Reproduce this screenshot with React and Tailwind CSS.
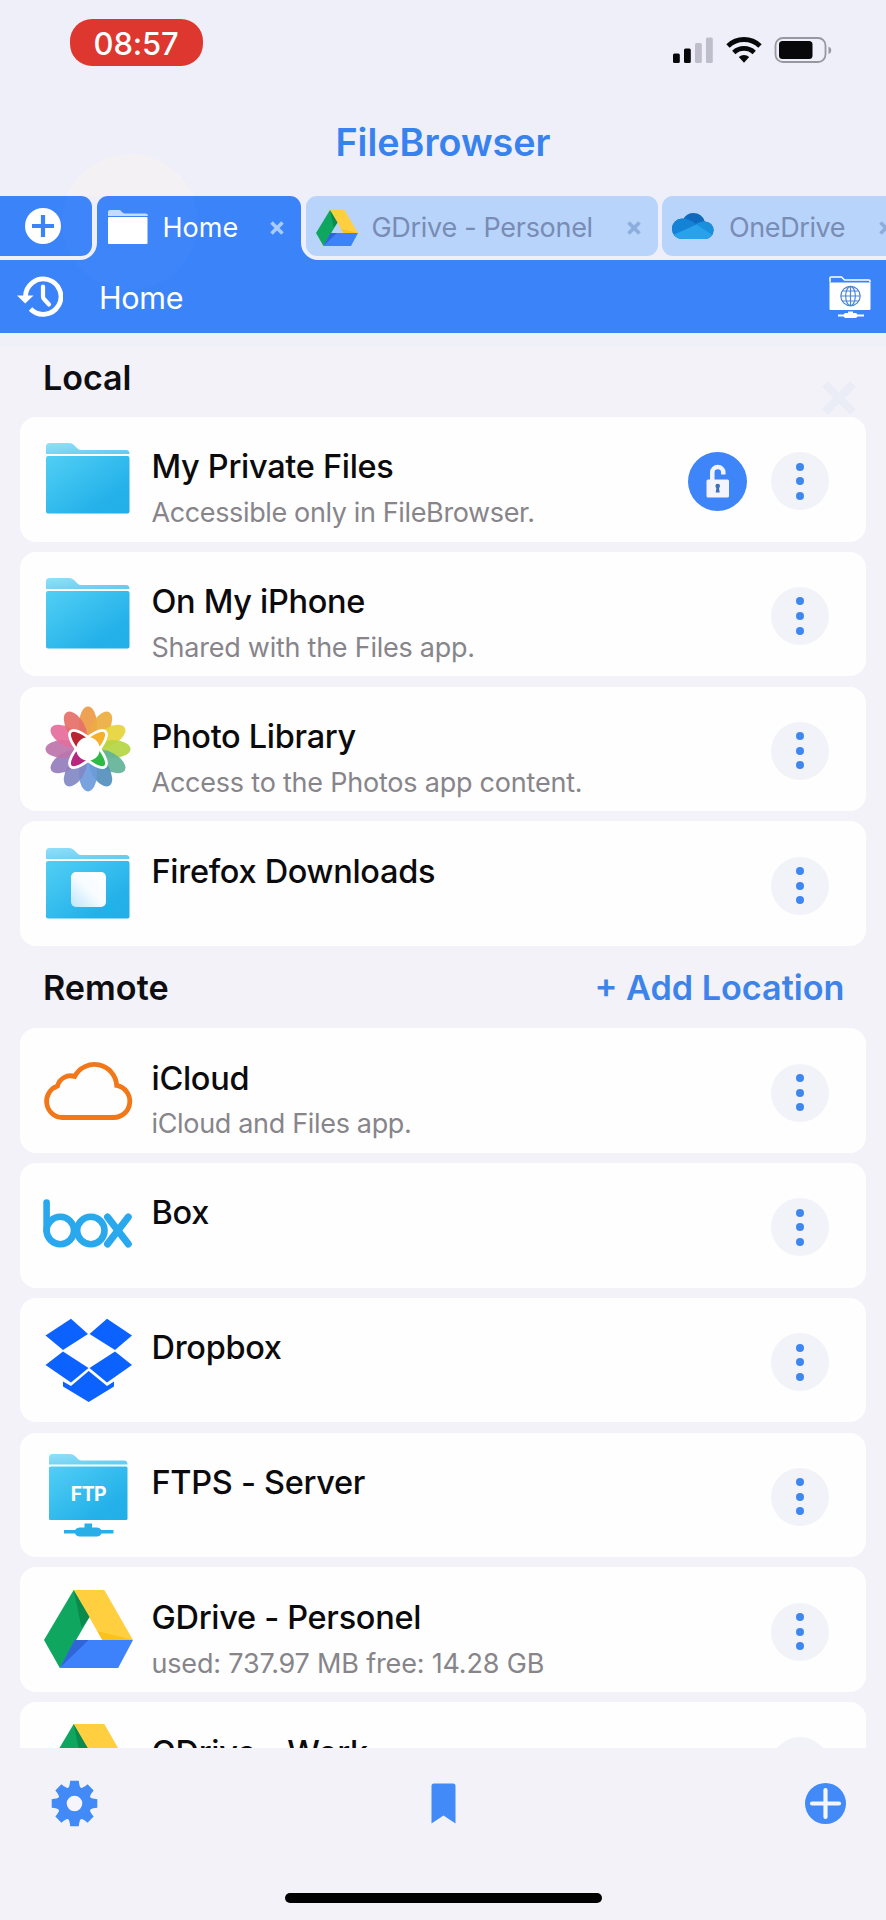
const DRIVE_FACES = [
  ["M30 0 L0 50 L16 78 L46 27 Z", "#0FA75F"],
  ["M30 0 L61 0 L90 50 L59 50 Z", "#FFCF3F"],
  ["M31 50 L90 50 L75 78 L16 78 Z", "#3E82FB"],
  ["M30 0 L46 27 L38 38 Z", "#0B8A4C"],
  ["M16 78 L31 50 L45 50 Z", "#2F65D6"],
  ["M90 50 L54 41 L59 50 Z", "#FBC21B"],
];

function DriveIcon({ className }) {
  return (
    <svg viewBox="0 0 90 78" className={className} preserveAspectRatio="none">
      {DRIVE_FACES.map(([d, fill]) => (
        <path key={d} d={d} fill={fill} />
      ))}
    </svg>
  );
}

function Frame({ children }) {
  return (
    <svg viewBox="0 0 90 90" className="h-[90px] w-[90px] shrink-0">
      {children}
    </svg>
  );
}

function Gradients({ id }) {
  return (
    <defs>
      <linearGradient id={id} x1="0" y1="0" x2="1" y2="1">
        <stop offset="0" stopColor="#51CFF5" />
        <stop offset="0.75" stopColor="#24B1E9" />
        <stop offset="1" stopColor="#22AEE7" />
      </linearGradient>
      <linearGradient id={id + "-back"} x1="0" y1="0" x2="1" y2="1">
        <stop offset="0" stopColor="#90E0FA" />
        <stop offset="1" stopColor="#62C9EE" />
      </linearGradient>
    </defs>
  );
}

function FolderIcon({ id, badge }) {
  return (
    <Frame>
      <Gradients id={id} />
      <path
        d="M3 20 V12.500 Q3 9 6.500 9 H26 Q29 9 31 11 L34.500 14.500 Q36 16 38.500 16 H83 Q86.500 16 86.500 20 Z"
        fill={`url(#${id}-back)`}
      />
      <rect x="3" y="22" width="83.500" height="57.500" rx="2" fill={`url(#${id})`} />
      {badge && (
        <>
          <defs>
            <linearGradient id={id + "-badge"} x1="0" y1="1" x2="1" y2="0">
              <stop offset="0" stopColor="#BFE5FB" />
              <stop offset="0.5" stopColor="#F7FCFF" />
              <stop offset="1" stopColor="#FFFFFF" />
            </linearGradient>
          </defs>
          <rect x="28" y="33" width="35" height="35" rx="5" fill={`url(#${id}-badge)`} />
        </>
      )}
    </Frame>
  );
}

const PETALS = [
  "#EB9A45", "#EBAC40", "#E6D53A", "#B5D543", "#62B397", "#538FBC",
  "#6E9BDC", "#8288C4", "#957DBC", "#BD74AB", "#E56C9C", "#E56F66",
];

const LOBES = [
  ["#F5B12E", -45],
  ["#2DBB45", 45],
  ["#B8267F", 135],
  ["#B92430", 225],
];

function PhotosIcon() {
  return (
    <Frame>
      {PETALS.map((fill, i) => (
        <ellipse
          key={fill}
          cx="45"
          cy="20"
          rx="9"
          ry="17.500"
          fill={fill}
          fillOpacity="0.92"
          transform={`rotate(${i * 30} 45 45)`}
        />
      ))}
      <g transform="translate(45 45)" stroke="#fff" strokeWidth="2.800">
        {LOBES.map(([fill, angle]) => (
          <path
            key={fill}
            d="M0 -8.700 A24.600 8.700 0 0 1 0 8.700 Z"
            fill={fill}
            transform={`rotate(${angle})`}
          />
        ))}
      </g>
      <circle cx="45" cy="45" r="11.800" fill="#fff" />
    </Frame>
  );
}

function ICloudIcon() {
  return (
    <Frame>
      <path
        d="M19.300 71.500 H70.400 A16.200 16.200 0 0 0 73.700 39.400 A22.300 22.300 0 0 0 31.700 30.400 A13.500 13.500 0 0 0 14.500 40 A16.200 16.200 0 0 0 19.300 71.500 Z"
        fill="none"
        stroke="#F27719"
        strokeWidth="4.800"
      />
    </Frame>
  );
}

function BoxIcon() {
  return (
    <Frame>
      <g fill="none" stroke="#29A8EE" strokeWidth="6.600" strokeLinecap="round">
        <path d="M3.600 22.500 V50.500" />
        <circle cx="17.300" cy="50.500" r="13.700" />
        <circle cx="47.800" cy="50.500" r="13.700" />
        <path strokeWidth="7" d="M64.500 37 L85.300 64 M85.300 37 L64.500 64" />
      </g>
    </Frame>
  );
}

function DropboxIcon() {
  return (
    <Frame>
      <g fill="#0B62FF">
        <path d="M28 3.700 L45 19 L20 35 L2.500 20.500 Z" />
        <path d="M64 3.700 L89 20.500 L72 35 L46.500 19 Z" />
        <path d="M20 36.500 L45.500 53 L28 67.500 L2.500 50 Z" />
        <path d="M72 36.500 L89 50 L64 67.500 L46.500 53 Z" />
        <path d="M45.700 56 L64 71 L71 66.500 V71.500 L45.700 87 L20 71.500 V66.500 L28 71 Z" />
      </g>
    </Frame>
  );
}

function FtpIcon() {
  return (
    <Frame>
      <Gradients id="ftp" />
      <path
        d="M6 14.500 V7.500 Q6 4 9.500 4 H27 Q30 4 32 6 L35 9 Q36.500 10.500 39 10.500 H81 Q84.500 10.500 84.500 14.500 Z"
        fill="url(#ftp-back)"
      />
      <rect x="6" y="16.500" width="78.500" height="53.500" rx="1.500" fill="url(#ftp)" />
      <text
        x="45.500"
        y="50.500"
        textAnchor="middle"
        fontFamily="Inter, sans-serif"
        fontWeight="700"
        fontSize="19.500"
        letterSpacing="-0.600"
        fill="#fff"
      >
        FTP
      </text>
      <path
        d="M41.500 73.500 H49 V77.500 H54 Q57 77.500 58.500 80 H70.500 V83.500 H58.500 Q57 86.500 54 86.500 H36.500 Q33.500 86.500 32 83.500 H21 V80 H32 Q33.500 77.500 36.500 77.500 H41.500 Z"
        fill="#29AEE6"
      />
    </Frame>
  );
}

function DriveRowIcon() {
  return (
    <div className="flex h-[90px] w-[90px] shrink-0 items-center justify-center pb-[2px]">
      <DriveIcon className="h-[78px] w-[89px]" />
    </div>
  );
}

function LockButton() {
  return (
    <button className="h-[59px] w-[59px]">
      <svg viewBox="0 0 59 59" className="h-full w-full">
        <circle cx="29.500" cy="29.500" r="29.500" fill="#3D85F8" />
        <path
          d="M24.300 29 V20.500 A5.500 5.500 0 0 1 35.300 20.500 V22.500"
          fill="none"
          stroke="#F3F4FC"
          strokeWidth="4.500"
        />
        <rect x="18.500" y="27.500" width="22.500" height="18" rx="1.500" fill="#F3F4FC" />
        <circle cx="29.700" cy="34" r="2.300" fill="#3D6FB8" />
        <path d="M28.700 34 H30.700 L31.700 40.500 H27.700 Z" fill="#3D6FB8" />
      </svg>
    </button>
  );
}

function MoreButton() {
  return (
    <button className="flex h-[58px] w-[58px] flex-col items-center justify-center gap-[6.600px] rounded-full bg-[#F2F2F9]">
      <span className="h-2 w-2 rounded-full bg-[#3F87F0]" />
      <span className="h-2 w-2 rounded-full bg-[#3F87F0]" />
      <span className="h-2 w-2 rounded-full bg-[#3F87F0]" />
    </button>
  );
}

function Row({ icon, title, note, noteClass, locked }) {
  return (
    <div className="flex h-[124.600px] shrink-0 rounded-2xl bg-[#FEFEFF] pr-[37px] pl-[23px]">
      <div className="pt-[17.300px]">{icon}</div>
      <div className="min-w-0 flex-1 pt-[30.400px] pl-[18.500px] whitespace-nowrap">
        <div className="text-[32.500px] leading-[40px] font-medium tracking-[-0.300px] text-[#0B0B0D]">{title}</div>
        {note && (
          <div className={`mt-[9.800px] text-[27px] leading-[32px] text-[#87858A] ${noteClass}`}>{note}</div>
        )}
      </div>
      <div className="flex items-center gap-[24.500px] pt-[4px]">
        {locked && <LockButton />}
        <MoreButton />
      </div>
    </div>
  );
}

function Close({ className }) {
  return (
    <svg viewBox="0 0 14 14" className={`h-3.5 w-3.5 shrink-0 ${className}`}>
      <path d="M1.500 1.500 L12.500 12.500 M12.500 1.500 L1.500 12.500" stroke="currentColor" strokeWidth="3.600" />
    </svg>
  );
}

function OneDriveIcon() {
  return (
    <svg viewBox="0 0 42 26" className="h-[26px] w-[42px] shrink-0">
      <defs>
        <clipPath id="onedrive-cloud">
          <circle cx="21.500" cy="11.800" r="11.800" />
          <circle cx="10.200" cy="15.800" r="10.200" />
          <circle cx="32.800" cy="17.200" r="8.800" />
          <rect x="10" y="12" width="23" height="14" />
        </clipPath>
      </defs>
      <g clipPath="url(#onedrive-cloud)">
        <rect width="42" height="26" fill="#0F6ABD" />
        <path d="M0 3 L10 5.500 Q17 5.500 24 11 L14 26 H0 Z" fill="#1483D6" />
        <path d="M24 11 Q29 7.500 35 8.500 H42 V26 H20 Z" fill="#1A8FDB" />
        <path d="M0 22.500 L24.500 11.500 L42 23 V26 H0 Z" fill="#28A2EA" />
      </g>
    </svg>
  );
}

function StatusBar() {
  return (
    <div className="flex h-[85px] justify-between pr-[54.500px] pl-[69.500px]">
      <div className="mt-[19px] flex h-[47px] w-[133px] items-center justify-center rounded-[22px] bg-[#DD372F] pt-[3px] text-[31px] font-medium tracking-[-0.200px] text-white">
        08:57
      </div>
      <svg viewBox="0 0 160 28" className="mt-9 h-7 w-40">
        <rect x="1" y="17.500" width="6.800" height="9.500" rx="1.500" fill="#08080A" />
        <rect x="12" y="12.500" width="6.800" height="14.500" rx="1.500" fill="#08080A" />
        <rect x="23" y="7" width="6.800" height="20" rx="1.500" fill="#BEBDC9" />
        <rect x="34" y="1.500" width="6.800" height="25.500" rx="1.500" fill="#BEBDC9" />
        <g fill="none" stroke="#08080A" strokeWidth="4.800">
          <path d="M56 10 A23 23 0 0 1 88 10" />
          <path d="M61.800 16.400 A15 15 0 0 1 82.200 16.400" />
        </g>
        <path d="M66.800 21 A8 8 0 0 1 77.200 21 L72 26.800 Z" fill="#08080A" />
        <rect x="103.500" y="2" width="50" height="24" rx="7.500" fill="none" stroke="#98979F" strokeWidth="1.800" />
        <rect x="107" y="5" width="33.500" height="18" rx="3.500" fill="#08080A" />
        <path d="M156.500 10.500 Q159.300 11.500 159.300 14.200 Q159.300 17 156.500 18 Z" fill="#98979F" />
      </svg>
    </div>
  );
}

function TabStrip() {
  return (
    <div className="flex h-16 overflow-hidden bg-[linear-gradient(#EEEFF8_50%,#3B83F9_50%)] text-[27px] whitespace-nowrap">
      <div className="h-16 w-[97px] shrink-0 rounded-br-[17px] bg-[#EEEFF8]">
        <button className="flex h-[60px] w-[92px] items-center rounded-r-[11px] bg-[#3B83F9] pl-[25px]">
          <svg viewBox="0 0 36 36" className="h-9 w-9">
            <circle cx="18" cy="18" r="18" fill="#fff" />
            <path d="M7 18 H29 M18 7 V29" stroke="#3B83F9" strokeWidth="4.200" />
          </svg>
        </button>
      </div>
      <div className="flex h-16 w-[204px] shrink-0 items-center rounded-t-[11px] bg-[#3B83F9] pr-[17px] pb-[2px] pl-[11px] text-white">
        <svg viewBox="0 0 40 34" className="h-[34px] w-10 shrink-0">
          <path d="M0 6 V2 Q0 0 2 0 H12 Q15 3.500 17 3.500 H38 Q40 3.500 40 6 Z" fill="#C4DBFD" />
          <rect y="7" width="39.500" height="27" rx="1" fill="#fff" />
        </svg>
        <span className="flex-1 pt-[3px] pl-[14.500px]">Home</span>
        <Close className="mt-px text-[#A9CBFD]" />
      </div>
      <div className="flex h-16 flex-1 gap-[4.500px] rounded-bl-[17px] bg-[#EEEFF8] pl-[4.500px] text-[#788CB4]">
        <div className="flex h-[60px] w-[352px] shrink-0 items-center rounded-[11px] bg-[#B8D4FB] pr-[17px] pl-[10.500px]">
          <DriveIcon className="mt-1 h-9 w-[42px] shrink-0" />
          <span className="flex-1 pt-[5px] pl-[13.500px] tracking-[-0.300px]">GDrive - Personel</span>
          <Close className="mt-1 text-[#8DADDC]" />
        </div>
        <div className="flex h-[60px] w-[250px] shrink-0 items-center rounded-l-[11px] bg-[#B8D4FB] pl-[10px]">
          <OneDriveIcon />
          <span className="w-[165px] pt-[5px] pl-[15px] tracking-[-0.400px]">OneDrive</span>
          <Close className="mt-1 text-[#8DADDC]" />
        </div>
      </div>
    </div>
  );
}

function PathBar() {
  return (
    <div className="flex h-[73px] items-center bg-[#3B83F9] pr-[15.500px] pl-[17px] text-white">
      <svg viewBox="0 0 46 42" className="h-[42px] w-[46px] shrink-0">
        <path d="M8.500 21 A17.700 17.700 0 1 1 13.500 33" fill="none" stroke="#fff" strokeWidth="4.800" />
        <path d="M0 19.500 H16.500 L8.200 27.500 Z" fill="#fff" />
        <path d="M26 10.500 V20.500 Q26 22 27 23 L32 28.500" fill="none" stroke="#fff" strokeWidth="4.200" strokeLinecap="round" />
      </svg>
      <span className="flex-1 pt-[3px] pl-[36px] text-[30.500px] tracking-[-0.300px]">Home</span>
      <svg viewBox="0 0 42 42" className="h-[42px] w-[42px] shrink-0">
        <path d="M1 6.500 V1.800 Q1 1 2 1 H12.500 L15.500 4 H40 Q41 4 41 5 V6.500" fill="none" stroke="#fff" strokeWidth="1.500" />
        <rect x="0.500" y="6.500" width="41" height="27.500" rx="1" fill="#fff" />
        <g fill="none" stroke="#4C86D9" strokeWidth="1.200">
          <circle cx="21.500" cy="20" r="9.700" />
          <ellipse cx="21.500" cy="20" rx="4.800" ry="9.700" />
          <path d="M11.800 20 H31.200 M21.500 10.300 V29.700 M13.500 15 H29.500 M13.500 25 H29.500" />
        </g>
        <path d="M19 35.500 H24 V37 H27 L28.500 38.500 H35 V40.500 H28.500 L27 42 H16 L14.500 40.500 H9 V38.500 H14.500 L16 37 H19 Z" fill="#fff" />
      </svg>
    </div>
  );
}

function FadingSheet() {
  return (
    <div className="pointer-events-none absolute inset-0 text-[27px] leading-[32px] text-[#201060]/[0.025]">
      <div className="absolute top-[154px] left-[62px] h-[136px] w-[136px] rounded-full bg-[#FFF6F2]/35 [clip-path:inset(0_0_94px_0)]" />
      <div className="absolute top-[154px] left-[62px] h-[136px] w-[136px] rounded-full bg-[#FFF6F2]/[0.02]" />
      <svg viewBox="0 0 36 36" className="absolute top-[380px] left-[821px] h-9 w-9">
        <path d="M4 4 L32 32 M32 4 L4 32" stroke="#E2E6F3" strokeOpacity="0.5" strokeWidth="8" />
      </svg>
      <span className="absolute top-[414px] left-[328px] text-[37px] leading-[44px] font-semibold text-[#201060]/[0.012]">Connect to?</span>
      <span className="absolute top-[669px] left-[29px]">Computer/</span>
      <span className="absolute top-[936px] left-[68px]">Dropbox</span>
      <span className="absolute top-[936px] left-[381px]">OneDrive</span>
      <span className="absolute top-[936px] left-[738px]">Box</span>
    </div>
  );
}

const GEAR_TEETH = [0, 45, 90, 135, 180, 225, 270, 315];

function Toolbar() {
  return (
    <div className="flex h-[172px] flex-col items-center justify-between bg-[#F3F2F9] pt-8 pb-[17px]">
      <div className="grid w-full grid-cols-3 items-center pr-[40.500px] pl-[50.500px]">
        <svg viewBox="-23.500 -23.500 47 47" className="h-[47px] w-[47px]">
          <g fill="#428AF8">
            {GEAR_TEETH.map((a) => (
              <path key={a} d="M-6.500 -15 Q-4.800 -17 -4.300 -22.800 H4.300 Q4.800 -17 6.500 -15 Z" transform={`rotate(${a})`} />
            ))}
            <circle r="17" />
          </g>
          <circle r="7.800" fill="#F6F5FC" />
        </svg>
        <svg viewBox="0 0 25 41" className="mr-[10px] h-[41px] w-[25px] justify-self-center">
          <path d="M0.500 3 Q0.500 0.500 3 0.500 H22 Q24.500 0.500 24.500 3 V40.500 L12.500 32.500 L0.500 40.500 Z" fill="#428AF8" />
        </svg>
        <svg viewBox="0 0 41 41" className="h-[41px] w-[41px] justify-self-end">
          <circle cx="20.500" cy="20.500" r="20.500" fill="#428AF8" />
          <path d="M7 20.500 H34 M20.500 7 V34" stroke="#F6F5FC" strokeWidth="4.200" strokeLinecap="round" />
        </svg>
      </div>
      <div className="h-[10px] w-[317px] rounded-full bg-black" />
    </div>
  );
}

export default function App() {
  return (
    <div className="relative flex h-[1920px] w-[886px] flex-col overflow-hidden bg-[#F3F2F9] font-['Inter',sans-serif]">
      <header className="shrink-0 bg-[#EEEFF8]">
        <StatusBar />
        <h1 className="flex h-[111px] items-center justify-center pt-[3px] text-[37.700px] font-semibold text-[#3882EE]">FileBrowser</h1>
        <TabStrip />
        <PathBar />
      </header>
      <main className="flex min-h-0 flex-1 flex-col overflow-hidden border-t-[14px] border-[#EFF0F8] px-5">
        <h2 className="flex h-[70px] shrink-0 items-center pb-[10px] pl-[23px] text-[34px] font-semibold text-[#0E0E12]">Local</h2>
        <div className="flex shrink-0 flex-col gap-[10.200px]">
          <Row icon={<FolderIcon id="private" />} title="My Private Files" note="Accessible only in FileBrowser." noteClass="tracking-[-0.370px]" locked />
          <Row icon={<FolderIcon id="phone" />} title="On My iPhone" note="Shared with the Files app." noteClass="tracking-[-0.250px]" />
          <Row icon={<PhotosIcon />} title="Photo Library" note="Access to the Photos app content." noteClass="tracking-[-0.220px]" />
          <Row icon={<FolderIcon id="firefox" badge />} title="Firefox Downloads" />
        </div>
        <div className="flex h-[82.300px] shrink-0 items-center justify-between pt-[2px] pr-[21.500px] pl-[23px] text-[34.200px] font-semibold">
          <h2 className="text-[#0E0E12]">Remote</h2>
          <button className="text-[#3D84EA]">+ Add Location</button>
        </div>
        <div className="flex shrink-0 flex-col gap-[10.200px]">
          <Row icon={<ICloudIcon />} title="iCloud" note="iCloud and Files app." noteClass="tracking-[-0.330px]" />
          <Row icon={<BoxIcon />} title="Box" />
          <Row icon={<DropboxIcon />} title="Dropbox" />
          <Row icon={<FtpIcon />} title="FTPS - Server" />
          <Row icon={<DriveRowIcon />} title="GDrive - Personel" note="used: 737.97 MB free: 14.28 GB" noteClass="tracking-[-0.180px]" />
          <Row icon={<DriveRowIcon />} title="GDrive - Work" />
        </div>
      </main>
      <Toolbar />
      <FadingSheet />
    </div>
  );
}
